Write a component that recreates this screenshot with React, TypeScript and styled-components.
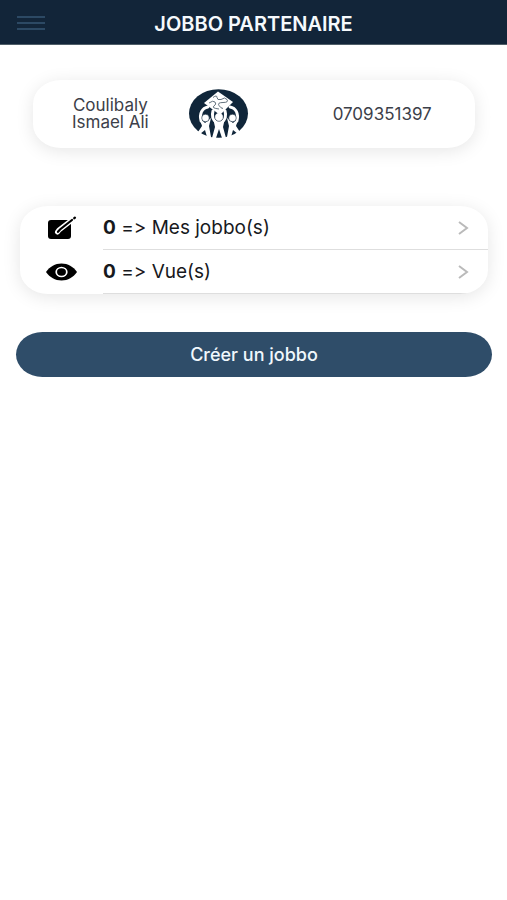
import React from 'react';
import styled, { createGlobalStyle } from 'styled-components';

const GlobalStyle = createGlobalStyle`
  * { box-sizing: border-box; }
  body {
    margin: 0;
    background: #fff;
    color: #17191d;
    font-family: Inter, "Liberation Sans", sans-serif;
    font-feature-settings: "calt" 0;
  }
  button { font-family: inherit; font-feature-settings: inherit; }
`;

const Header = styled.header`
  display: grid;
  grid-template-columns: 62px 1fr 62px;
  align-items: center;
  height: 45px;
  padding-top: 2px;
  background: #122539;
  border-bottom: 1px solid #4f5e68;
`;

const MenuButton = styled.button`
  display: flex;
  justify-content: center;
  padding: 8px 0;
  border: 0;
  background: none;
  color: #2c4964;
  cursor: pointer;
`;

const Title = styled.h1`
  margin: 0;
  padding-top: 2px;
  color: #f6fafd;
  font-size: 20px;
  line-height: 24px;
  font-weight: 600;
  text-align: center;
`;

const Profile = styled.section`
  display: grid;
  grid-template-columns: 35fr 14fr 9fr 42fr;
  align-items: center;
  justify-items: center;
  min-height: 68px;
  margin: 35px 32px 0 33px;
  border-radius: 28px / 24px;
  background: #fff;
  box-shadow: 0 3px 18px rgba(0, 0, 0, 0.1);
  color: #3c4049;
  font-size: 17px;
  line-height: 17px;
  text-align: center;
`;

const Name = styled.p`
  width: 84px;
  margin: 0;
`;

const Phone = styled.p`
  grid-column: 4;
  margin: 0;
`;

const Stats = styled.ul`
  margin: 58px 19px 0 20px;
  padding: 0;
  list-style: none;
  overflow: hidden;
  border-radius: 28px / 24px;
  background: #fff;
  box-shadow: 0 3px 18px rgba(0, 0, 0, 0.1);
`;

const StatRow = styled.button`
  display: grid;
  grid-template-columns: 83px 1fr;
  align-items: stretch;
  width: 100%;
  height: 44px;
  padding: 0;
  border: 0;
  background: none;
  color: inherit;
  text-align: left;
  cursor: pointer;
`;

const StatIcon = styled.span`
  display: flex;
  align-items: center;
  justify-content: center;
`;

const StatBody = styled.span`
  display: flex;
  align-items: center;
  justify-content: space-between;
  padding-right: 19px;
  border-bottom: 1px solid #dedede;
  font-size: 19px;
  line-height: 24px;
`;

const CreateButton = styled.button`
  display: block;
  width: calc(100% - 31px);
  height: 45px;
  margin: 38px 15px 0 16px;
  padding: 0;
  border: 0;
  border-radius: 27px / 23px;
  background: #2f4d69;
  color: #f1f8fd;
  font-size: 18px;
  line-height: 24px;
  font-weight: 500;
  cursor: pointer;
`;

const MenuIcon = () => (
  <svg width="28" height="16" viewBox="0 0 28 16" fill="none" stroke="currentColor" strokeWidth="2" aria-hidden="true">
    <path d="M0 2h28M0 8h28M0 14h28" />
  </svg>
);

const TeamLogo = () => (
  <svg width="60" height="50" viewBox="0 0 60 50" role="img" aria-label="Jobbo">
    <ellipse cx="29.500" cy="24.500" rx="29.500" ry="24.300" fill="#10263a" />
    <g fill="none" stroke="#fff" strokeLinecap="round" strokeLinejoin="round">
      <path d="M19 18C13 19 10 25 12 32L16 37M41 18c6 1 9 7 7 14L44 37" strokeWidth="2.800" />
      <path d="M24 22q-2 7 3 11M36 22q2 7-3 11" strokeWidth="3" />
    </g>
    <g fill="#fff">
      <path d="M11 30l5 4 6-5-2 8 2 11h-4l-2-7-5 4-2-2 4-6z" />
      <path d="M49 30l-5 4-6-5 2 8-2 11h4l2-7 5 4 2-2-4-6z" />
      <path d="M24 29l4 3h4l4-3-2 9 3 11h-4l-3-9-3 9h-4l3-11z" />
    </g>
    <g fill="#fff" stroke="#10263a" strokeWidth="0.6">
      <circle cx="16.500" cy="29" r="3.800" />
      <circle cx="43.500" cy="29" r="3.800" />
      <circle cx="30" cy="28" r="4.300" />
    </g>
    <path d="M29 2.500L44 13 31 26 15 14z" fill="#fff" />
    <path
      d="M24 8.500q4-3 4 0t4 2q4-3 6 0t-4 3-4 3 4 3M20 14q4-3 6-1t-1 4 5 3"
      fill="none"
      stroke="#52636f"
      strokeWidth="0.9"
    />
  </svg>
);

const EditIcon = () => (
  <svg width="30" height="24" viewBox="0 0 30 24" aria-hidden="true">
    <rect x="1" y="4" width="23" height="19" rx="3" />
    <path d="M25 4L12 14l-1.500 2" stroke="#fff" strokeWidth="5" strokeLinecap="round" strokeLinejoin="round" fill="none" />
    <path d="M25 4L13 13.500l-2 2.300" fill="none" stroke="#000" strokeWidth="2.200" strokeLinecap="round" />
    <path d="M27.300 2.200l.6-.5" stroke="#000" strokeWidth="2.400" strokeLinecap="round" />
  </svg>
);

const EyeIcon = () => (
  <svg width="32" height="18" viewBox="0 0 32 18" aria-hidden="true">
    <path d="M0 9C4 3.500 9 .5 15.500 .5S27 3.500 31 9c-4 5.500-9 8.500-15.500 8.500S4 14.500 0 9z" />
    <ellipse cx="15.500" cy="9" rx="5.300" ry="4.500" fill="none" stroke="#fff" strokeWidth="1.700" />
  </svg>
);

const Chevron = () => (
  <svg width="12" height="14" viewBox="0 0 12 14" fill="none" stroke="#bababa" strokeWidth="2" aria-hidden="true">
    <path d="M2 1l8 6-8 6" />
  </svg>
);

const stats = [
  { label: 'Mes jobbo(s)', count: 0, icon: <EditIcon /> },
  { label: 'Vue(s)', count: 0, icon: <EyeIcon /> },
];

export default function App() {
  return (
    <>
      <GlobalStyle />
      <Header>
        <MenuButton type="button" aria-label="Menu"><MenuIcon /></MenuButton>
        <Title>JOBBO PARTENAIRE</Title>
      </Header>
      <main>
        <Profile>
          <Name>Coulibaly Ismael Ali</Name>
          <TeamLogo />
          <Phone>0709351397</Phone>
        </Profile>
        <Stats>
          {stats.map(({ label, count, icon }) => (
            <li key={label}>
              <StatRow type="button">
                <StatIcon>{icon}</StatIcon>
                <StatBody>
                  <span><b>{count}</b> {'=>'} {label}</span>
                  <Chevron />
                </StatBody>
              </StatRow>
            </li>
          ))}
        </Stats>
        <CreateButton type="button">Créer un jobbo</CreateButton>
      </main>
    </>
  );
}
